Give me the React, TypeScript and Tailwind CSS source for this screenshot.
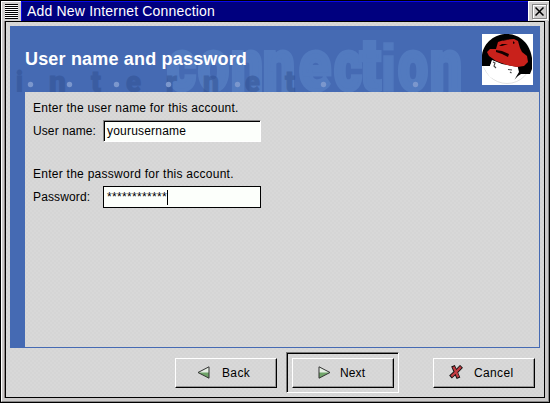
import React from "react";

const letters: [string, number, number][] = [
  ["c", 167, 29], ["o", 198, 31], ["n", 231, 32], ["n", 263, 32], ["e", 299, 32],
  ["c", 334, 28], ["t", 360, 21], ["o", 398, 30], ["n", 430, 32],
];
const small: [string, number, number][] = [
  ["i", 16, 7], ["n", 49, 17], ["t", 91, 10], ["e", 126, 15],
  ["r", 166, 11], ["n", 203, 16], ["e", 245, 15], ["t", 285, 10],
];
const dots = [30, 69, 116, 168, 237, 323, 415];

function Watermark() {
  return (
    <svg className="absolute left-0 top-0" width="530" height="66" viewBox="10 26 530 66" fontFamily="Roboto, sans-serif" fontWeight="900">
      <g fill="#527abf" stroke="#527abf" strokeWidth="4" fontSize="72">
        {letters.map(([c, x, w]) => (
          <text key={x} x={x} y="90" textLength={w} lengthAdjust="spacingAndGlyphs">{c}</text>
        ))}
        <text x="379.5" y="91" fontSize="66" strokeWidth="1.5" fontFamily="Liberation Sans, sans-serif" textLength="18" lengthAdjust="spacingAndGlyphs">i</text>
      </g>
      <g fill="#304f91" stroke="#304f91" strokeWidth="0.8" opacity="0.5" fontSize="29">
        {small.map(([c, x, w]) => (
          <text key={x} x={x} y="92" textLength={w} lengthAdjust="spacingAndGlyphs">{c}</text>
        ))}
      </g>
      {dots.map((x) => <circle key={x} cx={x + 0.5} cy="84.5" r="2.7" fill="#7b97cd" />)}
    </svg>
  );
}

function HatLogo() {
  return (
    <svg width="51" height="51" viewBox="0 0 51 51" className="bg-white">
      <circle cx="25" cy="25" r="24.5" fill="#fff" stroke="#d4d4d4" strokeWidth="0.7" />
      <path d="M0 32V21C2 8 13 0 25 0S48 9 50 24V35L48 40H39L36 42L32 46L35 39L36 33L20 30L10 26L8 32Z" fill="#000" />
      <path d="M10 27L14 28L23 32L36 34L37 38L34 43L32 47L20 48L8 43L1 32H8Z" fill="#fff" />
      <path d="M11 28L13 29L12 32L14 34M26 35.5L30 36M28 38L29.5 39" stroke="#444" strokeWidth="1.1" fill="none" />
      <path d="M5 18L8 15L14 15L16 8L22 6L32 5L36 7L38 14L40 18L45 22L46 28L42 32L35 33L25 31L14 27L7 22Z" fill="#c9211b" />
      <path d="M14 16L20 17L27 20L26 23L20 20L14 18ZM17 12L20 10L26 10L20 12ZM20 7L23 5L25 6ZM31 7L33 9L31 10Z" fill="#160000" />
    </svg>
  );
}

function Arrow({ flip = false }: { flip?: boolean }) {
  return (
    <svg width="13" height="13" viewBox="0 0 13 13" className={flip ? "-scale-x-100" : ""}>
      <path d="M1 .8L12 6.5L1 12.2Z" fill="#e6eee4" />
      <path d="M1 6.5H12L1 12.2Z" fill="#6fa468" />
      <path d="M1 .8L12 6.5L1 12.2Z" fill="none" stroke="#333" />
    </svg>
  );
}

function Cross() {
  return (
    <svg width="14" height="14" viewBox="0 0 14 14">
      <path d="M4 .8L6.5 6.5L9.5 13.2M12.5 1.3L8 6L1.5 12" fill="none" stroke="#111" strokeWidth="4" />
      <path d="M4.4 1.7L6.8 6.5L9.2 12.3M11.9 1.9L8 6L2.3 11.3" fill="none" stroke="#c23c42" strokeWidth="2.3" />
    </svg>
  );
}

function Button({ icon, label, inner, text }: { icon: React.ReactNode; label: string; inner: string; text: string }) {
  return (
    <button className="h-[30px] w-[102px] shrink-0 border border-b-black border-l-white border-r-black border-t-white">
      <span className={`flex h-full items-center border-b border-r border-[#969696] ${inner}`}>
        {icon}
        <span className={`whitespace-nowrap pt-px ${text}`}>{label}</span>
      </span>
    </button>
  );
}

export default function App() {
  return (
    <div className="flex h-[403px] w-[550px] flex-col overflow-hidden border border-black bg-[#cbc9c9] font-['Liberation_Sans',Arial,sans-serif] text-[12px] text-black">
      <div className="flex h-5 shrink-0">
        <div className="flex w-5 items-center justify-center border-l border-t border-white bg-[#d0cece]">
          <div className="h-[15px] w-[13px] bg-[repeating-linear-gradient(to_bottom,#000_0_1px,#fff_1px_2px)]" />
        </div>
        <div className="flex flex-1 items-center border-l border-t border-[#0808e8] bg-[#00007f] pl-[5px] text-[14px] tracking-[0.19px] text-white">Add New Internet Connection</div>
        <div className="flex w-[21px] items-center justify-center border-l border-t border-white bg-[#d0cece]">
          <div className="flex size-[15px] items-center justify-center border border-[#888] shadow-[inset_1px_1px_0_#fff,1px_1px_0_#fff]">
            <svg width="9" height="9" viewBox="0 0 9 9"><path d="M.5 .5L8.5 8.5M8.5 .5L.5 8.5" stroke="#000" strokeWidth="1.5" /></svg>
          </div>
        </div>
      </div>
      <div className="flex min-h-0 flex-1 border-b border-l border-r border-b-[#888] border-l-white border-r-[#888] pb-[3px] pr-[3px]">
        <div className="w-[3px] border-r border-[#8c8484]" />
        <div className="flex flex-1 flex-col border border-black bg-[repeating-conic-gradient(#d5d5d5_0_25%,#d8d8d8_0_50%)] bg-[length:4px_4px] pl-1 pr-[4px] pt-[4px]">
          <div className="relative flex h-[66px] shrink-0 items-center justify-between overflow-hidden bg-[#456ab3] pl-[15px] pr-[7px]">
            <Watermark />
            <h1 className="relative whitespace-nowrap text-[18px] font-bold tracking-[0.18px] text-white">User name and password</h1>
            <div className="relative"><HatLogo /></div>
          </div>
          <div className="h-[256px] shrink-0 border-b border-l-[15px] border-r border-[#456ab3] pl-2 pt-2">
            <p className="h-[14px] leading-[16px] tracking-[0.24px]">Enter the user name for this account.</p>
            <div className="mt-[6px] flex h-[22px] items-center">
              <span className="w-[70px] tracking-[0.1px]">User name:</span>
              <div className="h-[22px] w-[158px] border border-b-white border-l-[#888] border-r-white border-t-[#888]">
                <div className="h-full border-l border-t border-black bg-[#fcfffb] pl-[2px] leading-[18px] tracking-[0.2px]">yourusername</div>
              </div>
            </div>
            <p className="mt-[24px] h-[14px] leading-[16px] tracking-[0.26px]">Enter the password for this account.</p>
            <div className="mt-[6px] flex h-[22px] items-center">
              <span className="w-[70px] tracking-[0.13px]">Password:</span>
              <div className="flex h-[22px] w-[158px] items-center border border-black bg-[#fcfffb] pl-[3px]">
                <span className="tracking-[0.33px]">************</span><span className="h-[15px] w-px bg-black" />
              </div>
            </div>
          </div>
          <div className="flex h-[49px] shrink-0 items-center justify-end pr-[5px]">
            <Button icon={<Arrow flip />} label="Back" inner="pl-[21px]" text="ml-[12px] tracking-[0.35px]" />
            <div className="ml-[9px] flex h-[41px] w-[113px] items-center justify-center border border-b-white border-l-[#777] border-r-white border-t-[#777]">
              <div className="flex h-full w-full items-center justify-center border-l border-t border-black">
                <Button icon={<Arrow />} label="Next" inner="pl-[25px]" text="ml-[9px] tracking-[0.1px]" />
              </div>
            </div>
            <div className="ml-[34px]"><Button icon={<Cross />} label="Cancel" inner="pl-[15px]" text="ml-[11px] tracking-[0.35px]" /></div>
          </div>
        </div>
      </div>
    </div>
  );
}
